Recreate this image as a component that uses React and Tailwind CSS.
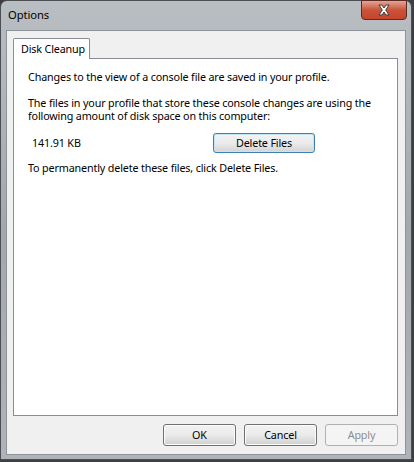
import React from 'react';

const font = { fontFamily: '"Noto Sans", "Open Sans", sans-serif' };

const WinButton = ({ children, className = '', disabled = false, focused = false }) => (
  <div
    className={`flex items-center justify-center rounded-[3px] border text-[10.75px] tracking-[-0.15px] leading-none whitespace-nowrap ${
      disabled
        ? 'border-[#adb2b5] bg-[#f4f4f4] text-[#8d8d8d]'
        : focused
        ? 'border-[#3c7fb1] bg-gradient-to-b from-[#f2f2f2] via-[#ebebeb] to-[#d4d4d4] text-black shadow-[inset_0_0_0_1px_#c4e5f6]'
        : 'border-[#707070] bg-gradient-to-b from-[#f2f2f2] via-[#ebebeb] to-[#cfcfcf] text-black shadow-[inset_0_0_0_1px_#fcfcfc]'
    } ${className}`}
  >
    {children}
  </div>
);

export default function App() {
  return (
    <div className="w-[414px] h-[462px] bg-[#3d3f42] overflow-hidden" style={font}>
      <div className="w-[412px] h-[460px] rounded-tl-[7px] rounded-tr-[7px] border border-[#4b4f54] bg-gradient-to-b from-[#b9bec3] via-[#a3a8ad] to-[#b0b4b8] flex flex-col px-[5px] pb-[4px]">
        {/* title bar */}
        <div className="h-[29px] flex items-start justify-between">
          <span className="mt-[7px] ml-[2px] text-[11.25px] tracking-[-0.1px] leading-[14px] text-black">Options</span>
          <div className="w-[46px] h-[20px] -mt-[1px] -mr-[1px] rounded-b-[4px] border border-[#5a2b22] bg-gradient-to-b from-[#e3a594] via-[#c9523b] to-[#c7452e] flex items-center justify-center">
            <svg width="14" height="12" viewBox="0 0 14 12">
              <path
                d="M2 1 L5 1 L7 4 L9 1 L12 1 L8.7 6 L12 11 L9 11 L7 8 L5 11 L2 11 L5.3 6 Z"
                fill="#fff"
                stroke="#3b3b3b"
                strokeWidth="1"
                strokeLinejoin="round"
              />
            </svg>
          </div>
        </div>
        {/* client area */}
        <div className="flex-1 border border-[#8e9399] bg-[#f0f0f0] flex flex-col">
          <div className="pl-[6px] pt-[7px] flex">
            <div className="w-[77px] h-[21px] border border-b-0 border-[#898c95] bg-white rounded-t-[2px] -mb-px relative z-10 text-[10.75px] tracking-[-0.15px] text-black flex items-center pl-[7px] whitespace-nowrap">
              Disk Cleanup
            </div>
          </div>
          <div className="ml-[6px] w-[385px] h-[358px] border border-[#898c95] bg-white pl-[14px] pt-[12px] text-[10.75px] tracking-[-0.15px] text-black leading-[13px]">
            <p className="whitespace-nowrap">Changes to the view of a console file are saved in your profile.</p>
            <p className="mt-[13px] whitespace-nowrap">
              The files in your profile that store these console changes are using the
              <br />
              following amount of disk space on this computer:
            </p>
            <div className="flex items-center mt-[10px]">
              <span className="ml-[4px] w-[181px]">141.91 KB</span>
              <WinButton focused className="w-[102px] h-[20px]">Delete Files</WinButton>
            </div>
            <p className="mt-[9px] whitespace-nowrap">To permanently delete these files, click Delete Files.</p>
          </div>
          <div className="flex justify-end gap-[8px] pr-[7px] mt-[8px]">
            <WinButton className="w-[73px] h-[22px]">OK</WinButton>
            <WinButton className="w-[73px] h-[22px]">Cancel</WinButton>
            <WinButton disabled className="w-[73px] h-[22px]">Apply</WinButton>
          </div>
        </div>
      </div>
    </div>
  );
}
